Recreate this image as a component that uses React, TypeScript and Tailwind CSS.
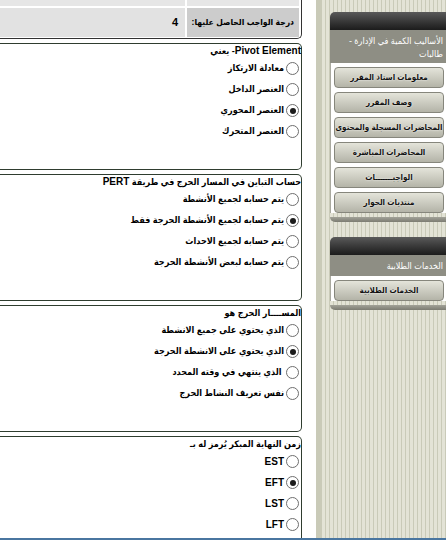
import React from 'react';

const FONT = "font-['Liberation_Sans','DejaVu_Sans_Condensed','DejaVu_Sans',sans-serif]";

type Q = { title: React.ReactNode; options: string[]; checked: number; latin?: boolean };

const Lat = ({ children }: { children: React.ReactNode }) => (
  <span className="text-[10px]">{children}</span>
);

const questions: Q[] = [
  {
    title: (
      <>
        <Lat>Pivot Element</Lat>- يعني
      </>
    ),
    options: ['معادلة الارتكاز', 'العنصر الداخل', 'العنصر المحوري', 'العنصر المتحرك'],
    checked: 2,
  },
  {
    title: (
      <>
        حساب التباين في المسار الحرج في طريقة <Lat>PERT</Lat>
      </>
    ),
    options: [
      'يتم حسابه لجميع الأنشطة',
      'يتم حسابه لجميع الأنشطة الحرجة فقط',
      'يتم حسابه لجميع الاحداث',
      'يتم حسابه لبعض الأنشطة الحرجة',
    ],
    checked: 1,
  },
  {
    title: 'المســــار الحرج هو',
    options: [
      'الذي يحتوي على جميع الانشطة',
      'الذي يحتوي على الانشطة الحرجة',
      ' الذي ينتهي في وقته المحدد',
      'نفس تعريف النشاط الحرج',
    ],
    checked: 1,
  },
  {
    title: 'زمن النهاية المبكر يُرمز له بـ',
    options: ['EST', 'EFT', 'LST', 'LFT'],
    checked: 1,
    latin: true,
  },
];

const menu = [
  'معلومات استاذ المقرر',
  'وصف المقرر',
  'المحاضرات المسجلة والمحتوى',
  'المحاضرات المباشرة',
  'الواجبـــــــات',
  'منتديات الحوار',
];

function Radio({ on }: { on: boolean }) {
  return (
    <span className="w-[13px] h-[13px] shrink-0 rounded-full border border-[#6e6e6e] bg-white flex items-center justify-center">
      {on && <span className="w-[6px] h-[6px] rounded-full bg-[#1c1c1c]" />}
    </span>
  );
}

function Question({ q }: { q: Q }) {
  return (
    <div className="mt-[4px] h-[127px] shrink-0 border border-l-0 border-[#2f3d2f] rounded-r-[5px] bg-white">
      <div dir="rtl" className="text-[9px] font-bold leading-[14px] text-black [font-stretch:condensed] whitespace-nowrap">
        {q.title}
      </div>
      <div dir="rtl" className="flex flex-col pr-[2px]">
        {q.options.map((o, i) => (
          <div key={i} className="h-[21px] flex items-center gap-[2px]">
            <Radio on={i === q.checked} />
            <span
              className={`${q.latin ? 'text-[10px]' : 'text-[9px]'} font-bold text-black whitespace-pre [font-stretch:condensed]`}
            >
              {o}
            </span>
          </div>
        ))}
      </div>
    </div>
  );
}

function MenuButton({ label }: { label: string }) {
  return (
    <div className="w-[110px] h-[21px] ml-[3px] mb-[4px] rounded-[4px] border border-[#86867c] bg-gradient-to-b from-[#e4e4da] to-[#b4b4a8] flex items-center justify-center text-[8px] font-bold text-[#111] [text-shadow:0_0_2px_#fff] [font-stretch:condensed]">
      <span dir="rtl" className="whitespace-nowrap">{label}</span>
    </div>
  );
}

function Panel({ title, items, titleH }: { title: string; items: string[]; titleH: string }) {
  return (
    <div className="w-[116px]">
      <div className="h-[18px] rounded-tl-[5px] bg-gradient-to-b from-[#5a5a5a] to-[#1c1c1c]" />
      <div dir="rtl" className={`${titleH} bg-[#8e8e84] text-white text-[9px] leading-[13px] pr-[3px] pt-[5px] [font-stretch:condensed]`}>
        {title}
      </div>
      <div className="bg-white border-l border-[#a9a99f] pt-[4px]">
        {items.map((m) => (
          <MenuButton key={m} label={m} />
        ))}
      </div>
      <div className="h-[5px] rounded-bl-[5px] bg-gradient-to-b from-[#a2a298] to-[#7c7c72]" />
    </div>
  );
}

export default function App() {
  return (
    <div className={`${FONT} w-[446px] h-[540px] overflow-hidden bg-white flex flex-col`}>
      <div className="h-[538px] flex">
        {/* main column */}
        <div className="w-[302px] shrink-0 flex flex-col">
          <div className="h-[39px] shrink-0 border-r border-b border-[#333] rounded-br-[5px] pr-[2px] flex flex-col gap-[2px] overflow-hidden">
            <div className="h-[6px] flex gap-[2px]">
              <div className="w-[185px] bg-[#e6e6e6]" />
              <div className="flex-1 bg-[#e6e6e6]" />
            </div>
            <div className="h-[29px] flex gap-[2px]">
              <div className="w-[185px] bg-[#e2e2e2] text-right pr-[7px] text-[11px] font-bold leading-[29px]">4</div>
              <div dir="rtl" className="flex-1 bg-[#cccccc] pr-[5px] text-[8.5px] font-bold leading-[29px] whitespace-nowrap [font-stretch:condensed]">
                درجة الواجب الحاصل عليها:
              </div>
            </div>
          </div>
          {questions.map((q, i) => (
            <Question key={i} q={q} />
          ))}
        </div>

        {/* sidebar */}
        <div className="flex-1 flex">
          <div className="w-[14px] bg-white" />
          <div className="flex-1 flex border-l-[6px] border-[#c9cab8] bg-[repeating-linear-gradient(90deg,#e3e3d6_0px,#e3e3d6_3px,#c9cab8_3px,#c9cab8_4px)] pl-[8px] pt-[12px] overflow-hidden">
            <div className="flex flex-col gap-[15px]">
              <Panel title="الأساليب الكمية في الإدارة - طالبات" items={menu} titleH="h-[33px]" />
              <Panel title="الخدمات الطلابية" items={['الخدمات الطلابية']} titleH="h-[21px]" />
            </div>
          </div>
        </div>
      </div>
      <div className="h-[2px] bg-[#4a76a0]" />
    </div>
  );
}
